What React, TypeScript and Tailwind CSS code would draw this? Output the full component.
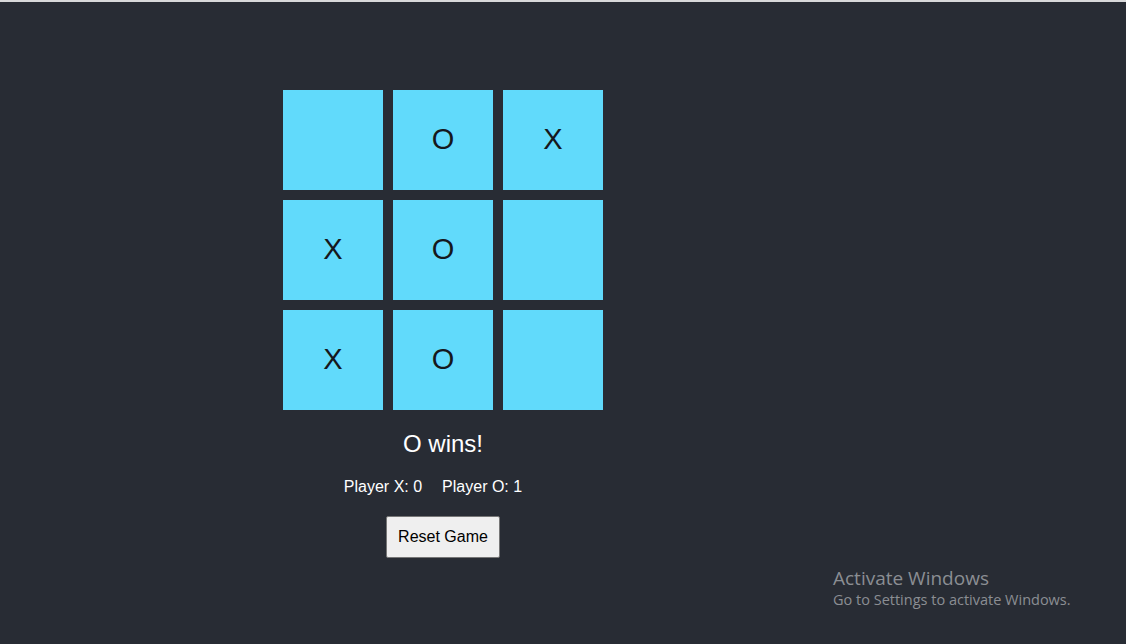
import React from "react";

const board = ["", "O", "X", "X", "O", "", "X", "O", ""];

export default function App() {
    return (
        <div className="relative h-[644px] w-[1126px] overflow-hidden bg-[#282c34] font-['Liberation_Sans',Arial,sans-serif]">
            {/* top strip */}
            <div className="h-[2px] bg-[#d8d9da]" />

            {/* Game */}
            <div className="ml-[283px] mt-[88px] flex w-[320px] flex-col items-center">
                <div className="grid grid-cols-3 gap-[10px]">
                    {board.map((cell, i) => (
                        <div
                            key={i}
                            className="flex h-[100px] w-[100px] items-center justify-center bg-[#61dafb] text-[29px] text-[#15181c]"
                        >
                            {cell}
                        </div>
                    ))}
                </div>

                <h2 className="mt-[20px] text-[24px] leading-[28px] text-white">O wins!</h2>

                <div className="mt-[20px] flex gap-[20px] pr-[20px] text-[16px] leading-[18px] text-white">
                    <span>Player X: 0</span>
                    <span>Player O: 1</span>
                </div>

                <button className="mt-[20px] h-[42px] w-[114px] rounded-[2px] border border-[#767676] bg-[#efefef] text-[16px] text-black">
                    Reset Game
                </button>
            </div>

            {/* Activate Windows watermark */}
            <div className="absolute left-[833px] top-[566px] font-['Open_Sans',sans-serif] text-[#8b8e93]">
                <p className="text-[19px] leading-[24px]">Activate Windows</p>
                <p className="text-[14.5px] leading-[20px]">Go to Settings to activate Windows.</p>
            </div>
        </div>
    );
}
